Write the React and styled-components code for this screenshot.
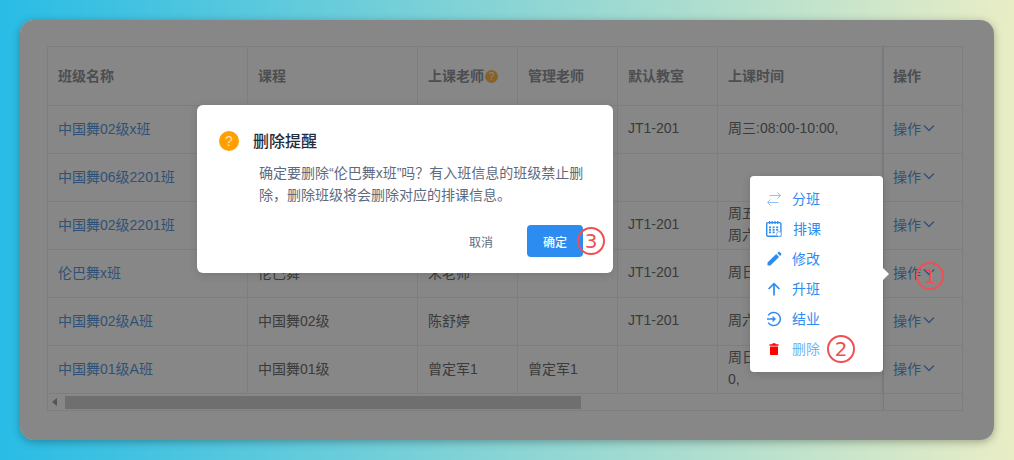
import React from 'react';
import styled, { createGlobalStyle } from 'styled-components';

const GlobalStyle = createGlobalStyle`
  html, body {
    margin: 0;
    padding: 0;
  }
  body {
    font-family: "Liberation Sans", "Noto Sans CJK SC", sans-serif;
    font-size: 14px;
  }
`;

const classRows = [
  { name: '中国舞02级x班', course: '中国舞02级', teacher: '陈舒婷', manager: '', room: 'JT1-201', time: ['周三:08:00-10:00,'] },
  { name: '中国舞06级2201班', course: '中国舞06级', teacher: '', manager: '', room: '', time: [] },
  { name: '中国舞02级2201班', course: '中国舞02级', teacher: '陈舒婷', manager: '', room: 'JT1-201', time: ['周五:08:00-10:00,', '周六:08:00-10:00,'] },
  { name: '伦巴舞x班', course: '伦巴舞', teacher: '宋老师', manager: '', room: 'JT1-201', time: ['周日:08:00-10:00,'] },
  { name: '中国舞02级A班', course: '中国舞02级', teacher: '陈舒婷', manager: '', room: 'JT1-201', time: ['周六:08:00-10:00,'] },
  { name: '中国舞01级A班', course: '中国舞01级', teacher: '曾定军1', manager: '曾定军1', room: '', time: ['周日:08:00-10:00,', '0,'] },
];

const deleteNotice = '确定要删除“伦巴舞x班”吗\uFF1F有入班信息的班级禁止删除\uFF0C删除班级将会删除对应的排课信息。';

function SwapIcon() {
  return (
    <svg width="16" height="16" viewBox="0 0 16 16" fill="none" stroke="#8fc3f7" strokeWidth="1">
      <path d="M3.5 4.5h11M11.5 1.5l3 3-3 3" />
      <path d="M12.5 11.5H1.5M4.5 8.5l-3 3 3 3" />
    </svg>
  );
}

function CalendarIcon() {
  return (
    <svg width="16" height="16" viewBox="0 0 16 16" fill="none" stroke="#2d8cf0">
      <rect x="0.7" y="1.6" width="14.2" height="13.6" rx="1.2" strokeWidth="1.4" />
      <path d="M3.6 0v3M6.2 0v3M9 0v3M11.8 0v3" strokeWidth="1.2" />
      <path d="M3 6.4h2M6.6 6.4h2M10.2 6.4h2M3 8.9h2M6.6 8.9h2M10.2 8.9h2M3 11.4h2M6.6 11.4h2" strokeWidth="1.6" />
      <circle cx="13" cy="13" r="2.4" fill="#fff" stroke="#7ab6f4" strokeWidth="1" />
    </svg>
  );
}

function PencilIcon() {
  return (
    <svg width="16" height="16" viewBox="0 0 16 16" fill="#2d8cf0">
      <path d="M1.5 11.6 10.2 3l2.9 2.9-8.7 8.6H1.5z" />
      <path d="M11.2 2 12.4.9c.4-.3.9-.3 1.2 0l1.6 1.6c.3.4.3.9 0 1.2L14.1 4.9z" />
    </svg>
  );
}

function UpIcon() {
  return (
    <svg width="16" height="16" viewBox="0 0 16 16" fill="none" stroke="#2d8cf0" strokeWidth="1.7">
      <path d="M8 14.5V3M2.6 8 8 2.6 13.4 8" />
    </svg>
  );
}

function FinishIcon() {
  return (
    <svg width="16" height="16" viewBox="0 0 16 16" fill="none" stroke="#2d8cf0" strokeWidth="1.5">
      <path d="M2.2 4.4A6.6 6.6 0 1 1 2.2 11.6" />
      <path d="M1 8h7" />
      <path d="M6.6 4.8 10 8l-3.4 3.2z" fill="#2d8cf0" stroke="none" />
    </svg>
  );
}

function TrashIcon() {
  return (
    <svg width="16" height="16" viewBox="0 0 16 16" fill="#ff0000">
      <path d="M6.5 2.2h3v1h3v1.5h-9V3.2h3z" />
      <path d="M4 5.4h8v7.6c0 .6-.4 1-1 1H5c-.6 0-1-.4-1-1z" />
    </svg>
  );
}

const menuItems = [
  { label: '分班', icon: <SwapIcon /> },
  { label: '排课', icon: <CalendarIcon />, nudge: true },
  { label: '修改', icon: <PencilIcon /> },
  { label: '升班', icon: <UpIcon /> },
  { label: '结业', icon: <FinishIcon /> },
  { label: '删除', icon: <TrashIcon />, faded: true, mark: '2' },
];

function App() {
  return (
    <Page>
      <GlobalStyle />
      <Card>
        <TableBox>
          <MainColumn>
            <HeadRow>
              <HeadCell>班级名称</HeadCell>
              <HeadCell>课程</HeadCell>
              <HeadCell>
                上课老师
                <HelpDot>?</HelpDot>
              </HeadCell>
              <HeadCell>管理老师</HeadCell>
              <HeadCell>默认教室</HeadCell>
              <HeadCell>上课时间</HeadCell>
            </HeadRow>
            {classRows.map((row) => (
              <BodyRow key={row.name}>
                <Cell><NameLink>{row.name}</NameLink></Cell>
                <Cell>{row.course}</Cell>
                <Cell>{row.teacher}</Cell>
                <Cell>{row.manager}</Cell>
                <Cell>{row.room}</Cell>
                <TimeCell>
                  {row.time.map((line) => <TimeLine key={line}>{line}</TimeLine>)}
                </TimeCell>
              </BodyRow>
            ))}
            <ScrollBar>
              <ScrollArrow />
              <ScrollThumb />
            </ScrollBar>
          </MainColumn>
          <FixedColumn>
            <FixedHead>操作</FixedHead>
            {classRows.map((row) => (
              <FixedCell key={row.name}>
                操作
                <svg width="12" height="12" viewBox="0 0 12 12" fill="none" stroke="#5c9ae0" strokeWidth="1.3">
                  <path d="M1 3.5 6 8.5l5-5" />
                </svg>
              </FixedCell>
            ))}
          </FixedColumn>
        </TableBox>
        <Mask />
        <Popover>
          <PopArrow />
          {menuItems.map((item) => (
            <MenuItem key={item.label} $faded={item.faded}>
              <MenuIcon>{item.icon}</MenuIcon>
              <MenuLabel $nudge={item.nudge}>{item.label}</MenuLabel>
              {item.mark && <InlineMark>{item.mark}</InlineMark>}
            </MenuItem>
          ))}
        </Popover>
        <FloatMark>1</FloatMark>
        <Modal>
          <ModalHead>
            <ModalIcon>?</ModalIcon>
            <ModalTitle>删除提醒</ModalTitle>
          </ModalHead>
          <ModalText>{deleteNotice}</ModalText>
          <ModalFoot>
            <CancelButton>取消</CancelButton>
            <ConfirmButton>
              确定
              <ButtonMark>3</ButtonMark>
            </ConfirmButton>
          </ModalFoot>
        </Modal>
      </Card>
    </Page>
  );
}

export default App;

const Page = styled.div`
  box-sizing: border-box;
  width: 1014px;
  height: 460px;
  padding: 20px;
  overflow: hidden;
  background: linear-gradient(90deg, #29bce5 0%, #e9edc5 100%);
`;

const Card = styled.div`
  position: relative;
  box-sizing: border-box;
  height: 420px;
  padding: 26px 31px 29px 27px;
  border-radius: 14px;
  background: #fff;
  box-shadow: 0 2px 8px rgba(0, 0, 0, 0.3);
`;

const Mask = styled.div`
  position: absolute;
  inset: 0;
  border-radius: 14px;
  background: rgba(0, 0, 0, 0.47);
`;

const TableBox = styled.div`
  display: flex;
  height: 365px;
  box-sizing: border-box;
  border: 1px solid #ebeef5;
  color: #707070;
  overflow: hidden;
`;

const MainColumn = styled.div`
  width: 835px;
  flex: none;
`;

const HeadRow = styled.div`
  display: grid;
  grid-template-columns: 200px 170px 100px 100px 100px 165px;
  height: 59px;
`;

const HeadCell = styled.div`
  display: flex;
  align-items: center;
  box-sizing: border-box;
  padding: 0 0 2px 10px;
  border-right: 1px solid #ebeef5;
  border-bottom: 1px solid #ebeef5;
  color: #909399;
  font-weight: 700;
  white-space: nowrap;
`;

const HelpDot = styled.span`
  display: inline-flex;
  align-items: center;
  justify-content: center;
  width: 13px;
  height: 13px;
  margin: 2px 0 0 1px;
  border-radius: 50%;
  background: #ffb84d;
  color: #fff;
  font-size: 10px;
  font-weight: 400;
`;

const BodyRow = styled.div`
  display: grid;
  grid-template-columns: 200px 170px 100px 100px 100px 165px;
  height: 48px;
`;

const Cell = styled.div`
  display: flex;
  align-items: center;
  box-sizing: border-box;
  padding: 0 0 3px 10px;
  border-right: 1px solid #ebeef5;
  border-bottom: 1px solid #ebeef5;
  white-space: nowrap;
`;

const TimeCell = styled(Cell)`
  flex-direction: column;
  align-items: flex-start;
  justify-content: center;
  overflow: hidden;
`;

const TimeLine = styled.div`
  line-height: 22px;
`;

const NameLink = styled.span`
  color: #5c9ae0;
`;

const ScrollBar = styled.div`
  display: flex;
  align-items: center;
  height: 16px;
  padding-left: 4px;
`;

const ScrollArrow = styled.span`
  width: 0;
  height: 0;
  border-top: 4px solid transparent;
  border-bottom: 4px solid transparent;
  border-right: 5px solid #a0a0a0;
`;

const ScrollThumb = styled.div`
  width: 516px;
  height: 13px;
  margin-left: 8px;
  background: #d2d2d2;
`;

const FixedColumn = styled.div`
  flex: 1;
  border-left: 1px solid #e4e6ea;
  box-shadow: -1px 0 3px rgba(0, 0, 0, 0.05);
`;

const FixedHead = styled.div`
  display: flex;
  align-items: center;
  box-sizing: border-box;
  height: 59px;
  padding: 0 0 2px 9px;
  border-bottom: 1px solid #ebeef5;
  color: #909399;
  font-weight: 700;
`;

const FixedCell = styled.div`
  display: flex;
  align-items: center;
  gap: 2px;
  box-sizing: border-box;
  height: 48px;
  padding: 0 0 3px 9px;
  border-bottom: 1px solid #ebeef5;
  color: #5c9ae0;
`;

const Popover = styled.div`
  position: absolute;
  left: 730px;
  top: 156px;
  box-sizing: border-box;
  width: 133px;
  height: 196px;
  padding: 8px 0;
  border-radius: 4px;
  background: #fff;
  box-shadow: 0 2px 8px rgba(0, 0, 0, 0.15);
`;

const PopArrow = styled.span`
  position: absolute;
  right: -6px;
  top: 92px;
  width: 0;
  height: 0;
  border-top: 6px solid transparent;
  border-bottom: 6px solid transparent;
  border-left: 6px solid #fff;
`;

const MenuItem = styled.div`
  display: flex;
  align-items: center;
  height: 30px;
  padding-left: 16px;
  color: ${(props) => (props.$faded ? '#72b4f6' : '#2d8cf0')};
`;

const MenuIcon = styled.span`
  display: flex;
  width: 16px;
  height: 16px;
  margin-right: 10px;
`;

const MenuLabel = styled.span`
  margin: -2px 0 0 ${(props) => (props.$nudge ? '1px' : '0')};
`;

const Circled = styled.span`
  display: flex;
  align-items: center;
  justify-content: center;
  box-sizing: border-box;
  width: 28px;
  height: 28px;
  border: 2px solid #ee5056;
  border-radius: 50%;
  color: #ee5056;
  font-family: "DejaVu Sans", sans-serif;
  font-size: 20px;
  font-weight: 400;
  line-height: 1;
`;

const InlineMark = styled(Circled)`
  margin-left: 7px;
`;

const FloatMark = styled(Circled)`
  position: absolute;
  left: 896px;
  top: 242px;
`;

const ButtonMark = styled(Circled)`
  position: absolute;
  left: 50px;
  top: 2px;
`;

const Modal = styled.div`
  position: absolute;
  left: 177px;
  top: 85px;
  box-sizing: border-box;
  width: 416px;
  height: 168px;
  padding: 26px 22px 16px 22px;
  border-radius: 6px;
  background: #fff;
  box-shadow: 0 2px 10px rgba(0, 0, 0, 0.12);
`;

const ModalHead = styled.div`
  display: flex;
  align-items: center;
  height: 20px;
`;

const ModalIcon = styled.span`
  display: flex;
  align-items: center;
  justify-content: center;
  width: 20px;
  height: 20px;
  margin-right: 14px;
  border-radius: 50%;
  background: #ff9f00;
  color: #ffe3b0;
  font-size: 14px;
`;

const ModalTitle = styled.span`
  margin-top: -2px;
  color: #1f2d3d;
  font-size: 16px;
  font-weight: 500;
`;

const ModalText = styled.div`
  width: 328px;
  margin: 11px 0 0 40px;
  color: #5e6a80;
  line-height: 22px;
`;

const ModalFoot = styled.div`
  display: flex;
  justify-content: flex-end;
  align-items: center;
  margin: 19px 8px 0 0;
`;

const CancelButton = styled.span`
  margin-right: 34px;
  color: #5e6a80;
  font-size: 12px;
`;

const ConfirmButton = styled.span`
  position: relative;
  display: flex;
  align-items: center;
  justify-content: center;
  width: 56px;
  height: 32px;
  border-radius: 4px;
  background: #2d8cf0;
  color: #fff;
  font-size: 12px;
  font-weight: 500;
`;
